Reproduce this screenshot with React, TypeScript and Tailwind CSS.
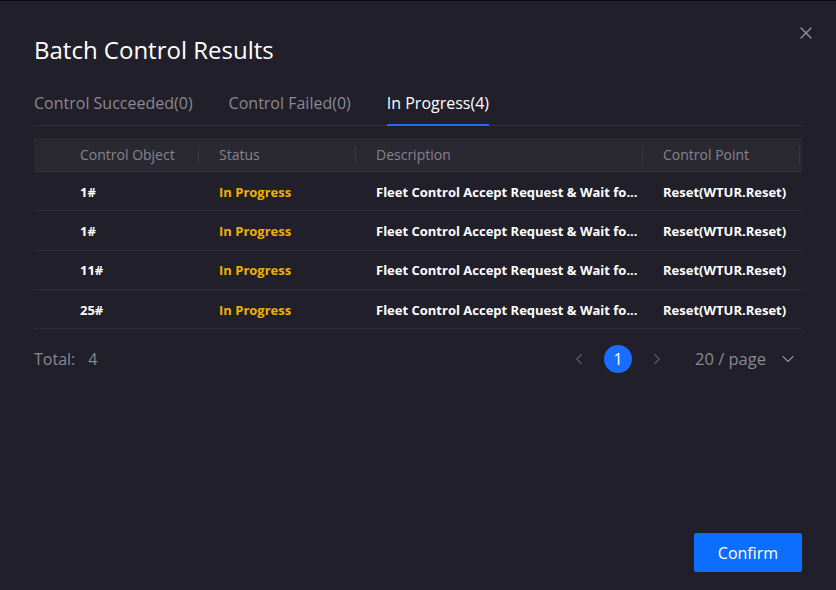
import { X, ChevronLeft, ChevronRight, ChevronDown } from "lucide-react";

const DESC = "Fleet Control Accept Request & Wait for Result";

const rows = [
  { object: "1#", status: "In Progress", description: DESC, point: "Reset(WTUR.Reset)" },
  { object: "1#", status: "In Progress", description: DESC, point: "Reset(WTUR.Reset)" },
  { object: "11#", status: "In Progress", description: DESC, point: "Reset(WTUR.Reset)" },
  { object: "25#", status: "In Progress", description: DESC, point: "Reset(WTUR.Reset)" },
];

const tabs = [
  { label: "Control Succeeded(0)", active: false },
  { label: "Control Failed(0)", active: false },
  { label: "In Progress(4)", active: true },
];

// the table cuts long descriptions with an ellipsis
const clip = (text: string, max = 38) => (text.length > max ? text.slice(0, max) + "..." : text);

const App = () => {
  return (
    <div
      className="w-[836px] h-[590px] bg-[#211f29] border-t border-[#0c0c10] flex flex-col px-[34px] relative"
      style={{ fontFamily: '"Open Sans", "Noto Sans", sans-serif' }}
    >
      <button className="absolute right-[20px] top-[22px] text-[#8c8b96]">
        <X className="w-[20px] h-[20px]" strokeWidth={1.75} />
      </button>

      <h1 className="text-[24px] leading-none text-white mt-[37px]">Batch Control Results</h1>

      {/* tabs */}
      <div className="flex gap-[36px] mt-[29px] border-b border-[#33323b]">
        {tabs.map((tab) => (
          <div
            key={tab.label}
            className={`text-[16px] pb-[9px] border-b-2 -mb-px ${
              tab.active ? "text-white border-[#1a6dff]" : "text-[#8a8994] border-transparent"
            }`}
          >
            {tab.label}
          </div>
        ))}
      </div>

      {/* table */}
      <div className="mt-[12px]">
        <div className="flex h-[34px] items-center bg-[#2a2932] border-b border-[#33323b] text-[#85848f] text-[14px] font-medium">
          <div className="w-[30px]" />
          <div className="w-[139px] pl-4 flex justify-between items-center">
            <span>Control Object</span>
            <span className="w-px h-[18px] bg-[#3a3943] mr-1" />
          </div>
          <div className="w-[157px] pl-4 flex justify-between items-center">
            <span>Status</span>
            <span className="w-px h-[18px] bg-[#3a3943] mr-1" />
          </div>
          <div className="w-[287px] pl-4 flex justify-between items-center">
            <span>Description</span>
            <span className="w-px h-[18px] bg-[#3a3943] mr-1" />
          </div>
          <div className="flex-1 pl-4 flex justify-between items-center">
            <span>Control Point</span>
            <span className="w-px h-[18px] bg-[#3a3943] mr-[2px]" />
          </div>
        </div>
        {rows.map((row, i) => (
          <div key={i} className="flex h-[39.25px] items-center pt-[3px] border-b border-[#302f38] font-bold text-[13px]">
            <div className="w-[30px]" />
            <div className="w-[139px] pl-4 text-white">{row.object}</div>
            <div className="w-[157px] pl-4 text-[#f0b100]">{row.status}</div>
            <div className="w-[287px] pl-4 text-white whitespace-nowrap" title={row.description}>
              {clip(row.description)}
            </div>
            <div className="flex-1 pl-4 text-white whitespace-nowrap">{row.point}</div>
          </div>
        ))}
      </div>

      {/* footer */}
      <div className="flex items-center mt-[16px] h-[28px]">
        <span className="text-[16px] text-[#8a8994]">
          Total:<span className="ml-[13px]">4</span>
        </span>
        <div className="ml-auto flex items-center text-[#5e5d68]">
          <ChevronLeft className="w-[18px] h-[18px]" strokeWidth={1.5} />
          <div className="w-[28px] h-[28px] rounded-full bg-[#1a6dff] text-white text-[16px] flex items-center justify-center mx-[16px]">
            1
          </div>
          <ChevronRight className="w-[18px] h-[18px]" strokeWidth={1.5} />
          <span className="text-[16.5px] text-[#8a8994] ml-[29px]">20 / page</span>
          <ChevronDown className="w-[20px] h-[20px] text-[#8a8994] ml-[12px] mr-[4px]" strokeWidth={1.5} />
        </div>
      </div>

      <div className="mt-auto mb-[18px] flex justify-end">
        <button className="w-[108px] h-[39px] bg-[#0d6efd] rounded-[2px] text-white text-[16px]">Confirm</button>
      </div>
    </div>
  );
};

export default App;
